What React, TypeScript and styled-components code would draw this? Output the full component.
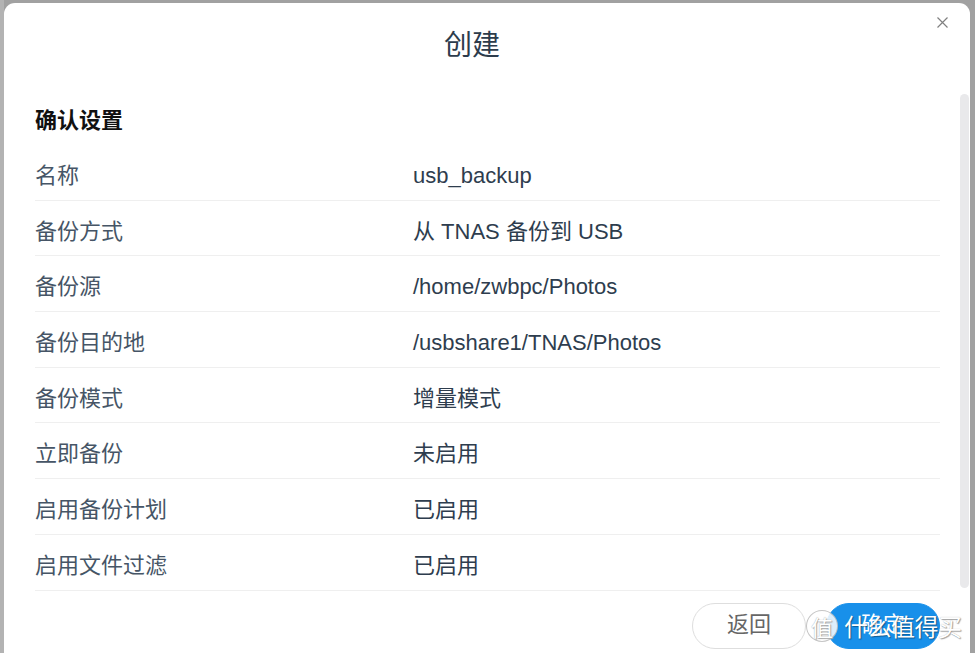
import React from "react";
import styled, { createGlobalStyle } from "styled-components";

const GlobalStyle = createGlobalStyle`
  html, body {
    margin: 0;
    padding: 0;
    height: 100%;
    overflow: hidden;
    background: #a1a1a1;
  }
  #root { height: 100%; }
  * { box-sizing: border-box; }
`;

const FONT = `"Liberation Sans", "Noto Sans CJK SC", sans-serif`;

const Page = styled.div`
  position: relative;
  height: 100%;
  padding: 3px 5px 0 4px;
  font-family: ${FONT};
  background: linear-gradient(to right, #b3b3b3 0, #b3b3b3 4px, transparent 4px);
`;

const Dialog = styled.div`
  height: 670px;
  background: #ffffff;
  border-radius: 11px;
  display: flex;
  flex-direction: column;
  overflow: hidden;
`;

const Header = styled.div`
  position: relative;
  height: 82px;
  padding: 3px 30px 0 0;
  display: flex;
  align-items: center;
  justify-content: center;
`;

const Title = styled.h1`
  margin: 0;
  font-size: 28px;
  font-weight: 400;
  line-height: 32px;
  color: #2d3c4c;
`;

const CloseButton = styled.button`
  position: absolute;
  top: 11px;
  right: 20px;
  width: 16px;
  height: 16px;
  padding: 0;
  border: none;
  background: transparent;
  display: flex;
  align-items: center;
  justify-content: center;
  cursor: pointer;
`;

const Main = styled.div`
  display: flex;
  height: 507px;
`;

const Body = styled.div`
  flex: 1;
  padding: 24px 20px 0 31px;
`;

const ScrollTrack = styled.div`
  width: 9px;
  margin: 9px 1px 4px 0;
  display: flex;
`;

const ScrollThumb = styled.div`
  flex: 1;
  background: #e9e9eb;
  border-radius: 5px;
`;

const SectionTitle = styled.h2`
  margin: 0;
  font-size: 22px;
  font-weight: 700;
  line-height: 24px;
  color: #111111;
  height: 36px;
`;

const Row = styled.div`
  display: grid;
  grid-template-columns: 378px 1fr;
  height: 55.7px;
  padding-top: 19px;
  border-bottom: 1px solid #efefef;
`;

const Label = styled.div`
  font-size: 22px;
  line-height: 24px;
  color: #465566;
`;

const Value = styled.div`
  font-size: 22px;
  line-height: 24px;
  color: #2e3d4e;
`;

const Footer = styled.div`
  display: flex;
  justify-content: flex-end;
  gap: 20px;
  padding: 11px 30px 0 0;
`;

const PillButton = styled.button<{ $primary?: boolean }>`
  width: 114px;
  height: 46px;
  padding: 0 0 3px;
  border-radius: 23px;
  font-family: ${FONT};
  font-size: 22px;
  line-height: 24px;
  cursor: pointer;
  border: 1px solid ${(p) => (p.$primary ? "#1890ea" : "#dedede")};
  background: ${(p) => (p.$primary ? "#1890ea" : "#ffffff")};
  color: ${(p) => (p.$primary ? "#ffffff" : "#666666")};
`;

const Watermark = styled.div`
  position: absolute;
  left: 806px;
  top: 610px;
  display: flex;
  align-items: center;
  gap: 6px;
  pointer-events: none;
`;

const WatermarkBadge = styled.div`
  width: 32px;
  height: 32px;
  border-radius: 50%;
  border: 1px solid rgba(150, 150, 150, 0.55);
  background: rgba(255, 255, 255, 0.85);
  display: flex;
  align-items: center;
  justify-content: center;
  font-family: "Noto Sans CJK SC", sans-serif;
  font-size: 22px;
  color: #ffffff;
  text-shadow: 0 0 1px #999, 1px 1px 1px #aaa;
`;

const WatermarkText = styled.div`
  font-family: "Noto Sans CJK SC", sans-serif;
  font-size: 24px;
  line-height: 32px;
  letter-spacing: -0.5px;
  color: #ffffff;
  text-shadow: 1px 1px 1px rgba(0, 0, 0, 0.35), 0 0 1px rgba(0, 0, 0, 0.3);
`;

const rows: [string, string][] = [
  ["名称", "usb_backup"],
  ["备份方式", "从 TNAS 备份到 USB"],
  ["备份源", "/home/zwbpc/Photos"],
  ["备份目的地", "/usbshare1/TNAS/Photos"],
  ["备份模式", "增量模式"],
  ["立即备份", "未启用"],
  ["启用备份计划", "已启用"],
  ["启用文件过滤", "已启用"],
];

export default function App() {
  return (
    <>
      <GlobalStyle />
      <Page>
        <Dialog>
          <Header>
            <Title>创建</Title>
            <CloseButton aria-label="关闭">
              <svg width="11" height="11" viewBox="0 0 11 11">
                <path d="M0.5 0.5 L10.5 10.5 M10.5 0.5 L0.5 10.5" stroke="#808080" strokeWidth="1.2" fill="none" />
              </svg>
            </CloseButton>
          </Header>
          <Main>
            <Body>
              <SectionTitle>确认设置</SectionTitle>
              {rows.map(([k, v]) => (
                <Row key={k}>
                  <Label>{k}</Label>
                  <Value>{v}</Value>
                </Row>
              ))}
            </Body>
            <ScrollTrack>
              <ScrollThumb />
            </ScrollTrack>
          </Main>
          <Footer>
            <PillButton>返回</PillButton>
            <PillButton $primary>确定</PillButton>
          </Footer>
        </Dialog>
        <Watermark>
          <WatermarkBadge>值</WatermarkBadge>
          <WatermarkText>什么值得买</WatermarkText>
        </Watermark>
      </Page>
    </>
  );
}
